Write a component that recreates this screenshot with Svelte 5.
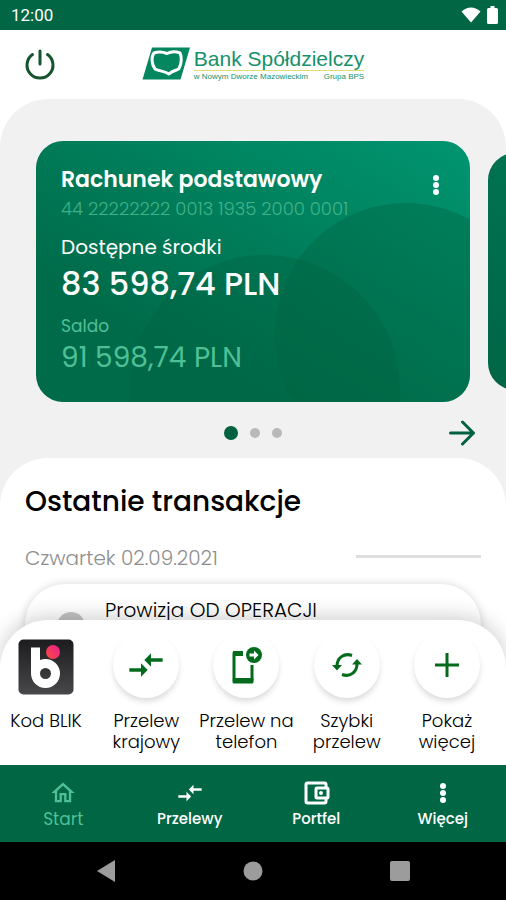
<script>
    const account = {
        name: 'Rachunek podstawowy',
        number: '44 22222222 0013 1935 2000 0001',
        available: '83 598,74 PLN',
        balance: '91 598,74 PLN'
    }

    const slides = [1, 2, 3]
    let activeSlide = $state(1)

    const actions = [
        { id: 'blik', label: 'Kod BLIK' },
        { id: 'transfer', label: 'Przelew krajowy' },
        { id: 'phone', label: 'Przelew na telefon' },
        { id: 'quick', label: 'Szybki przelew' },
        { id: 'more', label: 'Pokaż więcej' }
    ]

    const tabs = [
        { id: 'home', label: 'Start' },
        { id: 'transfer', label: 'Przelewy' },
        { id: 'wallet', label: 'Portfel' },
        { id: 'dots', label: 'Więcej' }
    ]
    let activeTab = $state('home')

    function nextSlide() {
        activeSlide = activeSlide === slides.length ? 1 : activeSlide + 1
    }
</script>

{#snippet transferIcon(size)}
    <svg width={size} height={size} viewBox="0 0 24 24" fill="currentColor" aria-hidden="true">
        <path d="M9.01 14H2v2h7.01v3L13 15l-3.99-4v3zm5.98-1v-3H22V8h-7.01V5L11 9l3.99 4z" />
    </svg>
{/snippet}

<div class="app">
    <div class="status">
        <span>12:00</span>
        <div class="status-icons">
            <svg width="20" height="16" viewBox="0 0 20 16" fill="#fff" aria-hidden="true">
                <path d="M10 15.500.5 4.500Q10-3.500 19.500 4.500z" />
            </svg>
            <svg width="11" height="18" viewBox="0 0 11 18" fill="#fff" aria-hidden="true">
                <path d="M3.500 0h4v2H9.500Q11 2 11 3.500V16.500Q11 18 9.500 18h-8Q0 18 0 16.500V3.500Q0 2 1.500 2h2z" />
            </svg>
        </div>
    </div>

    <header class="header">
        <button class="icon-button" aria-label="Wyloguj">
            <svg width="32" height="32" viewBox="0 0 32 32" fill="none" stroke="#14542f" stroke-width="3" stroke-linecap="round" aria-hidden="true">
                <path d="M16 2v13" />
                <path d="M8.500 5.500A13 13 0 1 0 23.500 5.500" />
            </svg>
        </button>
        <div class="brand">
            <svg class="brand-mark" width="48" height="33" viewBox="0 0 48 33" aria-hidden="true">
                <path d="M10 .5h38L38.500 32.500H.5z" fill="#04875f" />
                <path d="M12 6c4-1.500 8-1.500 13 .5 4-2 9-2 13-.5 2 4 1.500 11-1 15.500-1 2-6 1.500-10 5.500-4-3-9-2.500-14-5C9.500 17 9 10 12 6z" fill="none" stroke="#fff" stroke-width="3" stroke-linejoin="round" />
            </svg>
            <div class="brand-text">
                <div class="brand-name">Bank Spółdzielczy</div>
                <div class="brand-sub">
                    <span>w Nowym Dworze Mazowieckim</span>
                    <span>Grupa BPS</span>
                </div>
            </div>
        </div>
    </header>

    <main class="content">
        <section class="accounts">
            <div class="carousel">
                <article class="card">
                    <svg class="card-circles" viewBox="0 0 434 261" preserveAspectRatio="xMidYMid slice" aria-hidden="true">
                        <circle cx="370" cy="193" r="131" fill="#006442" fill-opacity=".38" />
                        <circle cx="229" cy="249" r="135" fill="#006442" fill-opacity=".42" />
                    </svg>
                    <div class="card-head">
                        <h2>{account.name}</h2>
                        <button class="icon-button" aria-label="Opcje rachunku">
                            <svg width="8" height="20" viewBox="0 0 8 20" fill="#fff" aria-hidden="true">
                                <circle cx="4" cy="3" r="3" />
                                <circle cx="4" cy="10" r="3" />
                                <circle cx="4" cy="17" r="3" />
                            </svg>
                        </button>
                    </div>
                    <div class="number">{account.number}</div>
                    <div class="label">Dostępne środki</div>
                    <div class="amount">{account.available}</div>
                    <div class="label label--muted">Saldo</div>
                    <div class="amount amount--muted">{account.balance}</div>
                </article>
                <div class="card card--next"></div>
            </div>

            <div class="pager">
                <div class="dots">
                    {#each slides as slide}
                        <button
                            class="dot"
                            class:active={slide === activeSlide}
                            aria-label={`Rachunek ${slide}`}
                            onclick={() => (activeSlide = slide)}
                        ></button>
                    {/each}
                </div>
                <button class="icon-button next" aria-label="Następny rachunek" onclick={nextSlide}>
                    <svg width="26" height="26" viewBox="0 0 26 26" fill="none" stroke="#00623f" stroke-width="3" stroke-linecap="round" stroke-linejoin="round" aria-hidden="true">
                        <path d="M1.500 13h23M13.500 2l11 11-11 11" />
                    </svg>
                </button>
            </div>
        </section>

        <section class="transactions">
            <h1>Ostatnie transakcje</h1>
            <div class="day">
                <span>Czwartek 02.09.2021</span>
                <hr />
            </div>
            <article class="transaction">
                <span class="avatar"></span>
                <span class="transaction-title">Prowizja OD OPERACJI</span>
            </article>
        </section>
    </main>

    <div class="actions">
        <div class="actions-row">
            {#each actions as action}
                <button class="action">
                    {#if action.id === 'blik'}
                        <span class="blik">
                            <svg width="56" height="56" viewBox="0 0 56 56" aria-hidden="true">
                                <defs>
                                    <linearGradient id="blik-bg" x1="0" y1="0" x2="0" y2="1">
                                        <stop offset="0" stop-color="#1c1b1e" />
                                        <stop offset="1" stop-color="#48474a" />
                                    </linearGradient>
                                    <linearGradient id="blik-dot" x1="0" y1="1" x2="1" y2="0">
                                        <stop offset="0" stop-color="#fb4a3d" />
                                        <stop offset="1" stop-color="#e81f8e" />
                                    </linearGradient>
                                </defs>
                                <rect x=".5" y=".5" width="55" height="55" rx="5" fill="url(#blik-bg)" />
                                <path d="M17.500 8.500V34" stroke="#fff" stroke-width="9" />
                                <circle cx="27.500" cy="34.500" r="10" fill="none" stroke="#fff" stroke-width="9" />
                                <circle cx="35" cy="13" r="7" fill="url(#blik-dot)" />
                            </svg>
                        </span>
                    {:else}
                        <span class="circle">
                            {#if action.id === 'transfer'}
                                {@render transferIcon(40)}
                            {:else if action.id === 'phone'}
                                <svg width="36" height="40" viewBox="0 0 36 40" aria-hidden="true">
                                    <path d="M15 8H6v27h18V20" fill="none" stroke="currentColor" stroke-width="3" stroke-linejoin="round" />
                                    <path d="M5 6h10v5H5zM5 33h20q.500 0 .500.500V37q0 1.500-1.500 1.500H6q-1.500 0-1.500-1.500z" fill="currentColor" />
                                    <circle cx="26" cy="10" r="8" fill="currentColor" />
                                    <path d="M21.500 8.500H26V5.500L30.500 10 26 14.500V11.500h-4.500z" fill="#fff" />
                                </svg>
                            {:else if action.id === 'quick'}
                                <svg width="32" height="28" viewBox="0 0 32 28" fill="none" stroke="currentColor" stroke-width="3" aria-hidden="true">
                                    <path d="M6 15C6 7 13 1.500 21 4.500" />
                                    <path d="M26 13c0 8-7 13.500-15 10.500" />
                                    <path d="M1 14h10l-5 5.500zM21 13.500h10L26 8z" fill="currentColor" stroke="none" />
                                </svg>
                            {:else}
                                <svg width="24" height="24" viewBox="0 0 24 24" fill="none" stroke="currentColor" stroke-width="3" aria-hidden="true">
                                    <path d="M12 0v24M0 12h24" />
                                </svg>
                            {/if}
                        </span>
                    {/if}
                    <span class="action-label">{action.label}</span>
                </button>
            {/each}
        </div>
    </div>

    <nav class="tabs">
        {#each tabs as tab}
            <button class="tab" class:active={tab.id === activeTab} onclick={() => (activeTab = tab.id)}>
                {#if tab.id === 'home'}
                    <svg width="28" height="28" viewBox="0 0 24 24" fill="currentColor" aria-hidden="true">
                        <path d="M12 5.690l5 4.500V18h-2v-6H9v6H7v-7.810l5-4.500M12 3L2 12h3v8h6v-6h2v6h6v-8h3L12 3z" />
                    </svg>
                {:else if tab.id === 'transfer'}
                    {@render transferIcon(28)}
                {:else if tab.id === 'wallet'}
                    <svg width="28" height="28" viewBox="0 0 28 28" fill="none" stroke="currentColor" stroke-width="3" stroke-linejoin="round" aria-hidden="true">
                        <path d="M24 9V5.500Q24 4 22.500 4h-17Q4 4 4 5.500v17Q4 24 5.500 24h17q1.500 0 1.500-1.500V19" />
                        <rect x="14" y="9" width="12" height="10" rx="1" />
                        <circle cx="19" cy="14" r="2" fill="currentColor" stroke="none" />
                    </svg>
                {:else}
                    <svg width="28" height="28" viewBox="0 0 28 28" fill="currentColor" aria-hidden="true">
                        <circle cx="14" cy="7" r="3" />
                        <circle cx="14" cy="14" r="3" />
                        <circle cx="14" cy="21" r="3" />
                    </svg>
                {/if}
                <span>{tab.label}</span>
            </button>
        {/each}
    </nav>

    <div class="system">
        <button aria-label="Wstecz">
            <svg width="20" height="22" viewBox="0 0 20 22" fill="#9c9c9c" aria-hidden="true"><path d="M19 0v22L1 11z" /></svg>
        </button>
        <button aria-label="Ekran główny">
            <svg width="20" height="20" viewBox="0 0 20 20" fill="#9c9c9c" aria-hidden="true"><circle cx="10" cy="10" r="9.500" /></svg>
        </button>
        <button aria-label="Ostatnie aplikacje">
            <svg width="20" height="20" viewBox="0 0 20 20" fill="#9c9c9c" aria-hidden="true"><rect width="20" height="20" rx="2" /></svg>
        </button>
    </div>
</div>

<style>
    :global(body) {
        margin: 0;
        background: #fff;
    }

    .app {
        --green: #006644;
        --icon-green: #046b1c;
        --mint: #4fc096;
        --page: #f1f1f1;
        display: flex;
        flex-direction: column;
        height: 100vh;
        overflow: hidden;
        background: #fff;
        color: #000;
        font-family: Poppins, Inter, "Noto Sans", sans-serif;
    }

    .app :global(svg) {
        display: block;
        flex: none;
    }

    button {
        padding: 0;
        border: none;
        background: none;
        color: inherit;
        font: inherit;
        cursor: pointer;
    }

    h1, h2 {
        margin: 0;
    }

    /* Top bars */
    .status {
        display: flex;
        flex: none;
        align-items: center;
        justify-content: space-between;
        height: 30px;
        padding: 0 8px 0 11px;
        background: var(--green);
        color: #fff;
        font: 400 17px Roboto, sans-serif;
    }

    .status-icons {
        display: flex;
        align-items: center;
        gap: 6px;
    }

    .header {
        display: grid;
        grid-template-columns: 72px 1fr 72px;
        flex: none;
        align-items: center;
        height: 69px;
        box-sizing: border-box;
    }

    .header .icon-button {
        justify-self: center;
        margin-left: 8px;
    }

    .brand {
        display: flex;
        justify-content: center;
        gap: 4px;
    }

    .brand-text {
        color: #16916b;
        font-family: "Liberation Sans", Arial, sans-serif;
    }

    .brand-name {
        border-bottom: 1px solid #dede6a;
        font-size: 21px;
        line-height: 23px;
    }

    .brand-sub {
        display: flex;
        justify-content: space-between;
        font-size: 8px;
        line-height: 12px;
    }

    /* Accounts */
    .content {
        display: flex;
        flex: 1;
        flex-direction: column;
        min-height: 0;
        overflow: hidden;
        border-radius: 48px 48px 0 0;
        background: var(--page);
    }

    .accounts {
        flex: none;
        padding-top: 42px;
    }

    .carousel {
        display: flex;
        align-items: center;
        gap: 18px;
        padding: 0 36px;
    }

    .card {
        position: relative;
        flex: 0 0 100%;
        box-sizing: border-box;
        padding: 24px 25px 26px;
        overflow: hidden;
        border-radius: 27px;
        background: linear-gradient(30deg, #006b49 25%, #00936e 95%);
        color: #fff;
    }

    .card > :not(.card-circles) {
        position: relative;
    }

    .card-circles {
        position: absolute;
        inset: 0;
        width: 100%;
        height: 100%;
    }

    .card--next {
        height: 237px;
        background: linear-gradient(30deg, #006545 0%, #00805c 100%);
    }

    .card-head {
        display: flex;
        align-items: center;
        justify-content: space-between;
    }

    .card-head .icon-button {
        margin: 10px 5px 0 0;
    }

    h2 {
        font-size: 22px;
        font-weight: 600;
        line-height: 30px;
    }

    .number {
        color: var(--mint);
        font-size: 18px;
        font-weight: 300;
        line-height: 28px;
        opacity: .8;
    }

    .label {
        margin-top: 8px;
        font-size: 20px;
        line-height: 32px;
    }

    .amount {
        font-size: 32px;
        font-weight: 500;
        line-height: 41px;
    }

    .label--muted {
        color: var(--mint);
        font-size: 17px;
        line-height: 28px;
    }

    .amount--muted {
        color: var(--mint);
        font-size: 28px;
        font-weight: 400;
        line-height: 36px;
    }

    .pager {
        display: grid;
        grid-template-columns: 1fr auto 1fr;
        align-items: center;
        box-sizing: border-box;
        height: 56px;
        padding: 6px 31px 0;
    }

    .dots {
        display: flex;
        align-items: center;
        gap: 12px;
        grid-column: 2;
    }

    .dot {
        width: 10px;
        height: 10px;
        border-radius: 50%;
        background: #b9b9b9;
    }

    .dot.active {
        width: 14px;
        height: 14px;
        background: #00623f;
    }

    .next {
        justify-self: end;
    }

    /* Transactions */
    .transactions {
        flex: 1;
        padding: 24px 25px 0;
        border-radius: 48px 48px 0 0;
        background: #fff;
    }

    h1 {
        font-size: 28px;
        font-weight: 500;
        line-height: 40px;
    }

    .day {
        display: flex;
        align-items: center;
        justify-content: space-between;
        margin-top: 20px;
        color: #8e8e8e;
        font-size: 20px;
        font-weight: 300;
        line-height: 32px;
    }

    hr {
        width: 125px;
        margin: 0 0 4px;
        border: none;
        border-top: 3px solid #dedede;
    }

    .transaction {
        display: flex;
        align-items: flex-start;
        height: 90px;
        margin-top: 10px;
        padding: 12px 32px;
        border-radius: 40px;
        background: #fff;
        box-shadow: 0 0 8px rgba(0, 0, 0, .16);
    }

    .avatar {
        width: 28px;
        height: 28px;
        margin: 16px 20px 0 0;
        border-radius: 50%;
        background: #c4c4c4;
    }

    .transaction-title {
        font-size: 20px;
        font-weight: 300;
        line-height: 28px;
    }

    /* Quick actions */
    .actions {
        z-index: 1;
        flex: none;
        margin-top: -48px;
        padding: 12px 0 13px;
        border-radius: 48px 48px 0 0;
        background: #fff;
        box-shadow: 0 -4px 20px rgba(0, 0, 0, .18);
    }

    .actions-row {
        display: grid;
        grid-template-columns: repeat(5, 1fr);
        margin: 0 9px 0 -4px;
    }

    .action {
        display: flex;
        flex-direction: column;
        align-items: center;
    }

    .blik,
    .circle {
        display: flex;
        align-items: center;
        justify-content: center;
        box-sizing: border-box;
        width: 66px;
        height: 66px;
        margin-bottom: 12px;
        border-radius: 50%;
        color: var(--icon-green);
    }

    .blik {
        padding-top: 4px;
    }

    .circle {
        box-shadow: 0 4px 6px -1px rgba(0, 0, 0, .16);
    }

    .action-label {
        max-width: 98px;
        font-size: 18px;
        font-weight: 300;
        line-height: 21px;
    }

    /* Bottom bars */
    .tabs {
        z-index: 1;
        display: grid;
        grid-template-columns: repeat(4, 1fr);
        flex: none;
        height: 77px;
        background: var(--green);
        color: #fff;
    }

    .tab {
        display: flex;
        flex-direction: column;
        align-items: center;
        justify-content: center;
        padding-top: 3px;
        font-size: 15px;
        font-weight: 500;
        line-height: 24px;
    }

    .tab.active {
        color: var(--mint);
        font-size: 17px;
        font-weight: 400;
    }

    .system {
        display: grid;
        grid-template-columns: repeat(3, 1fr);
        flex: none;
        height: 58px;
        padding: 0 32px;
        background: #000;
    }

    .system button {
        display: flex;
        align-items: center;
        justify-content: center;
    }
</style>
